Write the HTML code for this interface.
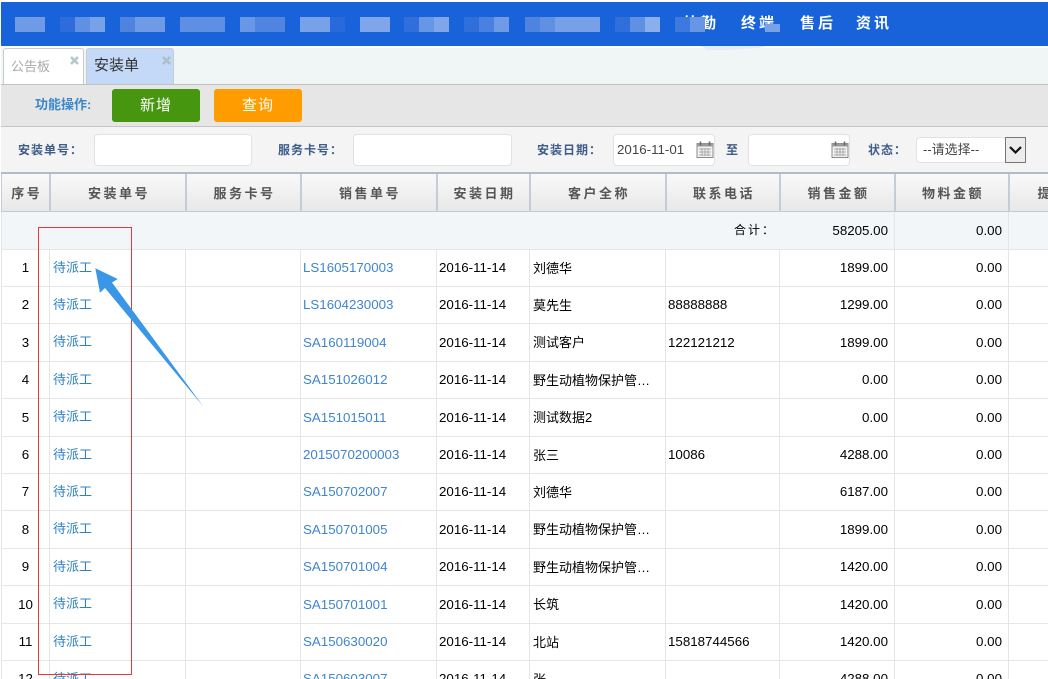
<!DOCTYPE html>
<html lang="zh-CN"><head><meta charset="utf-8"><title>安装单</title>
<style>
html,body{margin:0;padding:0;background:#fff}
body{width:1048px;height:679px;overflow:hidden}
#w{width:1048px;height:679px;overflow:hidden;position:relative;font-family:"Liberation Sans","WenQuanYi Zen Hei","Noto Sans CJK SC",sans-serif;font-size:13px;color:#000}
.a{position:absolute;box-sizing:border-box}
.nav{left:1px;top:2px;width:1047px;height:44px;background:#1863d9}
.m{position:absolute;top:15px;height:15px}
.t{position:absolute;top:13px;color:#fff;font-weight:bold;font-size:15px;letter-spacing:3px;line-height:18px;white-space:nowrap}
.tabbar{left:1px;top:48px;width:1047px;height:36px;background:#f0f6f6}
.tab{position:absolute;top:0;height:36px;box-sizing:border-box;border:1px solid #c8ccd0;border-bottom:none;border-radius:3px 3px 0 0}
.x{position:absolute;top:7px}
.bar1{left:1px;top:84px;width:1047px;height:43px;background:#e6e6e6;border-top:1px solid #c2c2c2;border-bottom:1px solid #c6c6c6}
.btn{position:absolute;top:89px;width:88px;height:33px;border-radius:3px;color:#fff;font-size:15px;line-height:33px;text-align:center;letter-spacing:1px}
.bar2{left:1px;top:127px;width:1047px;height:47px;background:#f4f4f4;border-bottom:2px solid #b3bbca}
.lab{position:absolute;top:142px;font-size:12px;line-height:16px;font-weight:bold;color:#3e5c88;letter-spacing:1px;white-space:nowrap}
.inp{position:absolute;top:134px;height:32px;box-sizing:border-box;background:#fff;border:1px solid #e2e2e2;border-radius:4px;font-size:13px;line-height:30px;color:#444}
table{position:absolute;left:1px;top:174px;border-collapse:collapse;table-layout:fixed;width:1061px}
th{height:36px;padding:0 0 1px 3px;font-size:13px;letter-spacing:2.5px;color:#555;font-weight:bold;background:linear-gradient(#f9f9f9,#e8e8e8);border-right:2px solid #c5ccd8;border-bottom:1px solid #c5ccd8;text-align:center;white-space:nowrap;overflow:hidden}
th:first-child{border-left:1px solid #c5ccd8}
td{padding:0 2px 1px;font-size:13.33px;border-right:1px solid #e6e6e6;border-bottom:1px solid #e6e6e6;white-space:nowrap;overflow:hidden;box-sizing:border-box}
td:first-child{border-left:1px solid #e6e6e6;text-align:center}
td.n{text-align:right;padding-right:6px}
td.c{font-size:13px;padding-left:3px;padding-bottom:2px}
.l{color:#2f80c4;font-size:13px;padding-left:3px;padding-bottom:4px}
.s{color:#3f85cf}
tr.sum td{background:#f2f6f9;border-right-color:#f2f6f9}
tr.sum td.n{border-right-color:#e6e6e6}
</style></head><body><div id="w">
<div class="a nav">
<span class="m" style="left:14px;width:30px;background:#6f9be6"></span>
<span class="m" style="left:59px;width:15px;background:#2f6cdb"></span><span class="m" style="left:74px;width:15px;background:#5f90e4"></span><span class="m" style="left:89px;width:15px;background:#78a2e8"></span>
<span class="m" style="left:119px;width:15px;background:#4e84e0"></span><span class="m" style="left:134px;width:30px;background:#6f9ae6"></span>
<span class="m" style="left:179px;width:45px;background:#5f8fe3"></span>
<span class="m" style="left:239px;width:15px;background:#6996e5"></span><span class="m" style="left:254px;width:30px;background:#4f84e0"></span>
<span class="m" style="left:299px;width:30px;background:#77a1e8"></span><span class="m" style="left:329px;width:15px;background:#2a69db"></span>
<span class="m" style="left:359px;width:30px;background:#7fa6ea"></span>
<span class="m" style="left:403px;width:15px;background:#2f6edb"></span><span class="m" style="left:418px;width:15px;background:#6896e6"></span><span class="m" style="left:433px;width:15px;background:#7fa6ea"></span>
<span class="m" style="left:463px;width:15px;background:#2f6edb"></span><span class="m" style="left:478px;width:15px;background:#4a80e0"></span><span class="m" style="left:493px;width:15px;background:#6f9be6"></span>
<span class="m" style="left:524px;width:15px;background:#4e84e0"></span><span class="m" style="left:539px;width:15px;background:#5f90e4"></span><span class="m" style="left:554px;width:45px;background:#76a0e8"></span>
<span class="m" style="left:614px;width:15px;background:#2f6edb"></span><span class="m" style="left:629px;width:15px;background:#5f90e4"></span><span class="m" style="left:644px;width:15px;background:#8aafec"></span>
<span class="t" style="left:682px">外勤</span>
<span class="t" style="left:740px">终端</span>
<span class="t" style="left:799px">售后</span>
<span class="t" style="left:855px">资讯</span>
<span class="m" style="left:674px;width:15px;height:15px;background:#3f78de"></span><span class="m" style="left:689px;width:15px;background:#6896e5"></span>
<span class="m" style="left:764px;top:22px;width:15px;height:8px;background:#78a2e8"></span>
</div>
<div class="a tabbar">
<div class="tab" style="left:2px;width:81px;background:#fff;color:#aaa;font-size:13px;line-height:35px;padding-left:7px">公告板<svg class="x" style="left:66px" width="9" height="9" viewBox="0 0 9 9"><path d="M1 1l7 7M8 1l-7 7" stroke="#b3c7cc" stroke-width="2.6"/></svg></div>
<div class="tab" style="left:85px;width:88px;background:#c3d9f7;color:#333;font-size:15px;line-height:34px;padding-left:7px">安装单<svg class="x" style="left:75px" width="9" height="9" viewBox="0 0 9 9"><path d="M1 1l7 7M8 1l-7 7" stroke="#a9c0c8" stroke-width="2.6"/></svg></div>
</div>
<div class="a" style="left:701px;top:45px;width:65px;height:5px;background:#e3ecf7;clip-path:polygon(0 20%,100% 20%,90% 60%,40% 100%,10% 100%)"></div>
<div class="a bar1"></div>
<div class="a" style="left:35px;top:97px;font-size:13px;font-weight:bold;color:#3a88c9;line-height:16px;white-space:nowrap">功能操作:</div>
<div class="btn" style="left:112px;background:#46960f">新增</div>
<div class="btn" style="left:214px;background:#ff9c00">查询</div>
<div class="a bar2"></div>
<span class="lab" style="left:18px">安装单号：</span><div class="inp" style="left:94px;width:158px"></div>
<span class="lab" style="left:278px">服务卡号：</span><div class="inp" style="left:353px;width:159px"></div>
<span class="lab" style="left:537px">安装日期：</span>
<div class="inp" style="left:613px;width:102px;padding-left:3px;font-size:13.33px">2016-11-01</div>
<svg class="a" style="left:696px;top:141px" width="19" height="18" viewBox="0 0 19 18"><rect x="1" y="2.5" width="16" height="14" fill="#f2f2f2" stroke="#8a8a8a"/><rect x="1" y="2.5" width="16" height="3" fill="#9a9a9a"/><path d="M4.5 0.5v4M13.5 0.5v4" stroke="#666" stroke-width="1.5"/><path d="M3 8h12M3 11h12M3 14h12M6 7v8M9 7v8M12 7v8" stroke="#aaa" stroke-width="1"/></svg>
<span class="lab" style="left:726px">至</span>
<div class="inp" style="left:748px;width:102px"></div>
<svg class="a" style="left:831px;top:141px" width="19" height="18" viewBox="0 0 19 18"><rect x="1" y="2.5" width="16" height="14" fill="#f2f2f2" stroke="#8a8a8a"/><rect x="1" y="2.5" width="16" height="3" fill="#9a9a9a"/><path d="M4.5 0.5v4M13.5 0.5v4" stroke="#666" stroke-width="1.5"/><path d="M3 8h12M3 11h12M3 14h12M6 7v8M9 7v8M12 7v8" stroke="#aaa" stroke-width="1"/></svg>
<span class="lab" style="left:868px">状态：</span>
<div class="inp" style="left:916px;top:137px;width:90px;height:26px;line-height:24px;padding-left:6px;font-size:13px;border-right:none">--请选择--</div>
<svg class="a" style="left:1005px;top:137px" width="21" height="26" viewBox="0 0 21 26"><rect x="0.5" y="0.5" width="20" height="25" fill="#ececec" stroke="#777"/><path d="M5 10l5.5 5.5L16 10" fill="none" stroke="#111" stroke-width="2.2"/></svg>
<table>
<colgroup><col style="width:48px"><col style="width:136px"><col style="width:115px"><col style="width:136px"><col style="width:93px"><col style="width:136px"><col style="width:114px"><col style="width:115px"><col style="width:114px"><col style="width:54px"></colgroup>
<tr><th>序号</th><th>安装单号</th><th>服务卡号</th><th>销售单号</th><th>安装日期</th><th>客户全称</th><th>联系电话</th><th>销售金额</th><th>物料金额</th><th style="text-align:left;padding-left:28px;border-right:none">提</th></tr>
<tr class="sum" style="height:38px"><td colspan="7" style="text-align:right;font-size:12px;letter-spacing:2px;padding-right:3px;padding-bottom:3px">合计：</td><td class="n">58205.00</td><td class="n">0.00</td><td></td></tr>
<tr style="height:37px"><td>1</td><td class="l">待派工</td><td></td><td class="s">LS1605170003</td><td>2016-11-14</td><td class="c">刘德华</td><td></td><td class="n">1899.00</td><td class="n">0.00</td><td></td></tr>
<tr style="height:37px"><td>2</td><td class="l">待派工</td><td></td><td class="s">LS1604230003</td><td>2016-11-14</td><td class="c">莫先生</td><td>88888888</td><td class="n">1299.00</td><td class="n">0.00</td><td></td></tr>
<tr style="height:38px"><td>3</td><td class="l">待派工</td><td></td><td class="s">SA160119004</td><td>2016-11-14</td><td class="c">测试客户</td><td>122121212</td><td class="n">1899.00</td><td class="n">0.00</td><td></td></tr>
<tr style="height:37px"><td>4</td><td class="l">待派工</td><td></td><td class="s">SA151026012</td><td>2016-11-14</td><td class="c">野生动植物保护管…</td><td></td><td class="n">0.00</td><td class="n">0.00</td><td></td></tr>
<tr style="height:38px"><td>5</td><td class="l">待派工</td><td></td><td class="s">SA151015011</td><td>2016-11-14</td><td class="c">测试数据2</td><td></td><td class="n">0.00</td><td class="n">0.00</td><td></td></tr>
<tr style="height:37px"><td>6</td><td class="l">待派工</td><td></td><td class="s">2015070200003</td><td>2016-11-14</td><td class="c">张三</td><td>10086</td><td class="n">4288.00</td><td class="n">0.00</td><td></td></tr>
<tr style="height:37px"><td>7</td><td class="l">待派工</td><td></td><td class="s">SA150702007</td><td>2016-11-14</td><td class="c">刘德华</td><td></td><td class="n">6187.00</td><td class="n">0.00</td><td></td></tr>
<tr style="height:38px"><td>8</td><td class="l">待派工</td><td></td><td class="s">SA150701005</td><td>2016-11-14</td><td class="c">野生动植物保护管…</td><td></td><td class="n">1899.00</td><td class="n">0.00</td><td></td></tr>
<tr style="height:37px"><td>9</td><td class="l">待派工</td><td></td><td class="s">SA150701004</td><td>2016-11-14</td><td class="c">野生动植物保护管…</td><td></td><td class="n">1420.00</td><td class="n">0.00</td><td></td></tr>
<tr style="height:38px"><td>10</td><td class="l">待派工</td><td></td><td class="s">SA150701001</td><td>2016-11-14</td><td class="c">长筑</td><td></td><td class="n">1420.00</td><td class="n">0.00</td><td></td></tr>
<tr style="height:37px"><td>11</td><td class="l">待派工</td><td></td><td class="s">SA150630020</td><td>2016-11-14</td><td class="c">北站</td><td>15818744566</td><td class="n">1420.00</td><td class="n">0.00</td><td></td></tr>
<tr style="height:37px"><td>12</td><td class="l">待派工</td><td></td><td class="s">SA150603007</td><td>2016-11-14</td><td class="c">张</td><td></td><td class="n">4288.00</td><td class="n">0.00</td><td></td></tr>
</table>
<div class="a" style="left:38px;top:227px;width:94px;height:448px;border:1px solid #e8393a"></div>
<svg class="a" style="left:0;top:0" width="1048" height="679"><polygon points="95.3,268.3 117.7,279 112,282.5 203.5,406.7 105,288 100,292.7" fill="#3a96e6"/></svg>
</div></body></html>
